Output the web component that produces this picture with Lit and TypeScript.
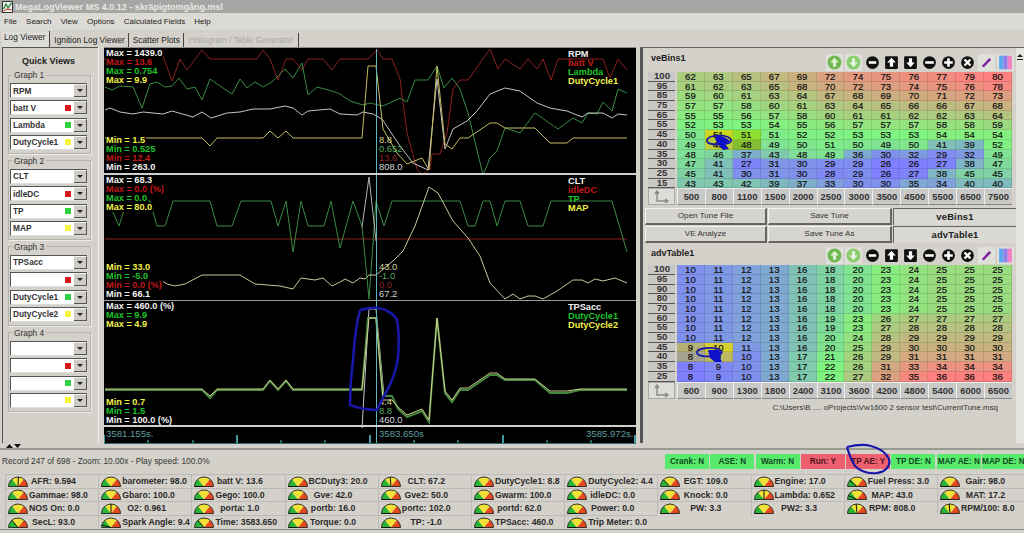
import { LitElement, css, html, svg } from "lit";
import { customElement } from "lit/decorators.js";

type Pt = [number, number];

const pts = (p: Pt[]) => p.map(([x, y]) => `${x},${y}`).join(" ");

// trace coordinates are page pixels, the plot svg has a matching viewBox
const TRACES: { color: string; width?: number; p: Pt[] }[] = [
  { color: "#8a2020", p: [[104,58],[163,55],[172,80],[180,58],[187,69],[202,49],[210,58],[257,58],[263,49],[270,58],[278,79],[286,58],[293,58],[302,69],[308,58],[323,58],[332,69],[340,58],[368,58],[377,49],[383,58],[392,58],[400,78],[407,132],[417,168],[422,174],[430,168],[432,153],[440,153],[447,132],[453,88],[460,79],[468,79],[490,48],[498,68],[505,58],[520,68],[528,58],[537,68],[543,58],[551,79],[558,58],[603,58],[610,77],[618,58],[627,69]] },
  { color: "#3a8a44", p: [[105,86],[112,89],[120,85],[133,86],[142,107],[150,83],[157,81],[165,86],[172,85],[179,77],[187,88],[195,86],[202,99],[210,78],[217,83],[232,93],[240,78],[247,87],[255,81],[263,86],[272,81],[285,68],[293,77],[302,62],[308,94],[317,86],[332,90],[340,93],[350,100],[363,104],[370,102],[383,105],[400,97],[407,101],[415,79],[428,79],[437,65],[444,87],[452,77],[460,88],[468,112],[483,174],[490,157],[497,150],[505,127],[520,132],[535,112],[558,128],[573,117],[582,122],[588,112],[597,113],[603,101],[612,110],[618,88],[627,92]] },
  { color: "#c4c4c4", p: [[105,109],[110,107],[120,111],[133,113],[143,111],[163,113],[172,110],[193,116],[202,111],[211,117],[227,112],[240,111],[253,108],[270,108],[285,105],[293,107],[302,114],[308,110],[330,108],[340,113],[357,114],[363,111],[373,113],[382,118],[400,145],[413,162],[428,169],[437,78],[445,148],[453,128],[467,120],[477,110],[490,93],[505,87],[520,90],[537,102],[550,107],[567,110],[582,116],[588,112],[603,112],[612,117],[618,113],[627,114]] },
  { color: "#c4bc60", p: [[105,137],[202,137],[210,145],[217,137],[263,137],[270,130],[278,137],[286,130],[293,137],[362,137],[368,65],[376,65],[383,128],[397,152],[407,163],[422,157],[429,169],[437,65],[445,143],[452,148],[460,137],[468,137],[490,122],[497,122],[505,127],[535,127],[550,142],[567,142],[573,137],[627,137]] },

  { color: "#8a2020", p: [[105,238],[627,238]] },
  { color: "#3a8a44", p: [[108,200],[119,225],[127,200],[150,200],[157,225],[165,225],[173,200],[210,200],[217,225],[232,225],[241,200],[271,200],[278,225],[286,200],[293,251],[301,200],[308,225],[324,225],[331,200],[340,247],[353,200],[362,225],[369,298],[376,200],[384,225],[392,200],[460,200],[468,225],[475,225],[483,200],[490,200],[497,225],[505,200],[520,200],[528,225],[543,225],[551,200],[612,200],[627,251]] },
  { color: "#c8c89c", p: [[162,280],[167,283],[175,285],[185,283],[202,274],[240,274],[255,283],[280,285],[293,288],[301,277],[315,279],[323,277],[332,285],[340,281],[345,278],[353,282],[360,277],[365,278],[369,274],[376,274],[393,260],[403,250],[415,225],[429,186],[438,192],[453,220],[468,237],[480,255],[490,282],[505,298],[513,293],[520,298],[528,295],[535,295],[543,298],[557,290],[573,279],[582,279],[588,282],[595,278],[603,280],[615,277],[627,282]] },
  { color: "#b0b0b0", p: [[362,226],[369,176],[376,240]] },

  { color: "#c8c8c8", p: [[362,427],[369,308],[376,308],[384,395]] },
  { color: "#46883f", width: 2, p: [[105,389],[202,389],[210,397],[217,389],[263,389],[270,380],[278,389],[286,380],[293,389],[362,389],[368,317],[376,317],[383,395],[392,395],[398,408],[407,416],[422,410],[429,421],[437,317],[445,392],[452,401],[460,389],[468,389],[490,374],[497,374],[505,379],[535,379],[550,392],[567,392],[580,389],[627,389]] },
  { color: "#d0d08c", p: [[105,388],[202,388],[210,395],[217,388],[263,388],[270,379],[278,388],[286,379],[293,388],[362,388],[369,317],[376,317],[383,399],[392,399],[398,406],[407,414],[422,408],[429,419],[437,317],[445,390],[452,399],[460,387],[468,387],[490,372],[497,372],[505,378],[535,378],[550,390],[567,390],[580,388],[627,388]] },
];

const BLUE_LOOPS = [
  { w: 2.6, d: "M360 310 C366 309 372 307 378 308 C386 309 394 314 397 320 C399 330 399 345 398 358 C396 372 389 388 383 398 L377 410 C368 410 358 408 350 405 C350 390 351 375 353 360 C354 345 356 325 360 310" },
  { w: 2.2, d: "M847 447 C855 445 864 444 871 446 C879 448 886 453 889 459 C891 466 885 472 877 473 C868 474 860 471 855 466 C851 460 849 454 847 447" },
  { w: 1.8, d: "M707 140 C708 136 720 134 728 137 C734 140 731 144 722 144 C714 145 706 144 707 140" },
  { w: 1.8, d: "M697 352 C698 348 710 347 718 349 C724 351 723 355 714 356 C706 357 696 356 697 352" },
];

const BLUE_BLOBS = [
  "M717 135 L726 138 L730 141 L725 144 L729 149 L723 150 L718 144 L715 139 Z",
  "M708 350 L718 350 L721 352 L720 358 L722 362 L715 362 L710 358 Z",
];

const TICKS = [104, 148, 193, 237, 281, 325, 370, 414, 458, 503, 547, 591, 635];
const LONG_TICKS = [104, 237, 370, 503, 635];

const GROUPS = [
  { title: "Graph 1", items: ["RPM", "batt V", "Lambda", "DutyCycle1"] },
  { title: "Graph 2", items: ["CLT", "idleDC", "TP", "MAP"] },
  { title: "Graph 3", items: ["TPSacc", "", "DutyCycle1", "DutyCycle2"] },
  { title: "Graph 4", items: ["", "", "", ""] },
];
const SWATCHES = ["", "#d81818", "#30d040", "#f4f440"];

const PLOTS = [
  {
    max: [["Max = 1439.0", "w"], ["Max = 13.6", "r"], ["Max = 0.754", "g"], ["Max = 9.9", "y"]],
    min: [["Min = 1.5", "y"], ["Min = 0.525", "g"], ["Min = 12.4", "r"], ["Min = 263.0", "w"]],
    names: [["RPM", "w"], ["batt V", "r"], ["Lambda", "g"], ["DutyCycle1", "y"]],
    cur: [["8.8", "cy"], ["0.652", "cg"], ["13.6", "cr"], ["808.0", "cw"]],
  },
  {
    max: [["Max = 68.3", "w"], ["Max = 0.0 (%)", "r"], ["Max = 0.0", "g"], ["Max = 80.0", "y"]],
    min: [["Min = 33.0", "y"], ["Min = -5.0", "g"], ["Min = 0.0 (%)", "r"], ["Min = 66.1", "w"]],
    names: [["CLT", "w"], ["idleDC", "r"], ["TP", "g"], ["MAP", "y"]],
    cur: [["43.0", "cy"], ["-1.0", "cg"], ["0.0", "cr"], ["67.2", "cw"]],
  },
  {
    max: [["Max = 460.0 (%)", "w"], ["Max = 9.9", "g"], ["Max = 4.9", "y"]],
    min: [["Min = 0.7", "y"], ["Min = 1.5", "g"], ["Min = 100.0 (%)", "w"]],
    names: [["TPSacc", "w"], ["DutyCycle1", "g"], ["DutyCycle2", "y"]],
    cur: [["4.4", "cy"], ["8.8", "cg"], ["460.0", "cw"]],
  },
];

const VE = {
  title: "veBins1",
  low: 26, mid: 53, high: 80,
  rows: [100, 95, 85, 75, 65, 55, 45, 40, 35, 30, 25, 15],
  cols: [500, 800, 1100, 1500, 2000, 2500, 3000, 3500, 4500, 5500, 6500, 7500],
  cells: [
    [62, 63, 65, 67, 69, 72, 74, 75, 76, 77, 79, 80],
    [61, 62, 63, 65, 68, 70, 72, 73, 74, 75, 76, 78],
    [59, 60, 61, 63, 64, 67, 68, 69, 70, 71, 72, 73],
    [57, 57, 58, 60, 61, 63, 64, 65, 66, 66, 67, 68],
    [55, 55, 56, 57, 58, 60, 61, 61, 62, 62, 63, 64],
    [52, 53, 53, 54, 55, 56, 57, 57, 57, 58, 58, 59],
    [50, 51, 51, 51, 52, 52, 53, 53, 53, 54, 54, 54],
    [49, 49, 48, 49, 50, 51, 50, 49, 50, 41, 39, 52],
    [48, 46, 37, 43, 48, 49, 36, 30, 32, 29, 32, 49],
    [47, 41, 27, 31, 30, 29, 29, 26, 26, 27, 38, 47],
    [45, 41, 30, 31, 30, 28, 29, 26, 27, 38, 45, 45],
    [43, 43, 42, 39, 37, 33, 30, 30, 35, 34, 40, 40],
  ],
  hot: { "6,1": "#ccd820", "6,2": "#90e030", "7,1": "#b8d040", "7,2": "#84bc34" } as Record<string, string>,
};

const ADV_A = [10, 11, 12, 13, 16, 18, 20, 23, 24, 25, 25, 25];
const ADV = {
  title: "advTable1",
  low: 8, mid: 22, high: 36,
  rows: [100, 95, 90, 80, 70, 60, 55, 50, 45, 40, 35, 25],
  cols: [600, 900, 1300, 1800, 2400, 3100, 3600, 4200, 4800, 5400, 6000, 6500],
  cells: [
    ADV_A, ADV_A, ADV_A, ADV_A, ADV_A,
    [10, 11, 12, 13, 16, 19, 23, 26, 27, 27, 27, 27],
    [10, 11, 12, 13, 16, 19, 23, 27, 28, 28, 28, 28],
    [10, 11, 12, 13, 16, 20, 24, 28, 29, 29, 29, 29],
    [9, 10, 11, 13, 16, 20, 25, 29, 30, 30, 30, 30],
    [8, 9, 10, 13, 17, 21, 26, 29, 31, 31, 31, 31],
    [8, 9, 10, 13, 17, 22, 26, 31, 33, 34, 34, 34],
    [8, 9, 10, 13, 17, 22, 27, 32, 35, 36, 36, 36],
  ],
  hot: { "8,0": "#b4b070", "8,1": "#d8d030", "9,0": "#a4a490", "9,1": "#c0b860" } as Record<string, string>,
};

// colour scale of a cell: blue at low, green at mid, red at high
function heat(v: number, low: number, mid: number, high: number) {
  if (v <= mid) {
    const t = Math.max(0, (v - low) / (mid - low));
    return `rgb(128,${Math.round(128 + 116 * t)},${Math.round(255 - 127 * t)})`;
  }
  const t = Math.min(1, (v - mid) / (high - mid));
  return `rgb(${Math.round(128 + 127 * t)},${Math.round(244 - 116 * t)},128)`;
}

const PILLS: [string, boolean][] = [
  ["Crank: N", false], ["ASE: N", false], ["Warm: N", false], ["Run: Y", true],
  ["TP AE: Y", true], ["TP DE: N", false], ["MAP AE: N", false], ["MAP DE: N", false],
];

// second value is the needle angle, degrees from the left end of the dial
const GAUGES: [string, number][] = [
  ["AFR: 9.594", 92], ["Gammae: 98.0", 0], ["NOS On: 0.0", 0], ["SecL: 93.0", 50],
  ["barometer: 98.0", 0], ["Gbaro: 100.0", 0], ["O2: 0.961", 90], ["Spark Angle: 9.4", 15],
  ["batt V: 13.6", 0], ["Gego: 100.0", 0], ["porta: 1.0", 0], ["Time: 3583.650", 50],
  ["BCDuty3: 20.0", 0], ["Gve: 42.0", 0], ["portb: 16.0", 0], ["Torque: 0.0", 0],
  ["CLT: 67.2", 85], ["Gve2: 50.0", 0], ["portc: 102.0", 0], ["TP: -1.0", 0],
  ["DutyCycle1: 8.8", 0], ["Gwarm: 100.0", 0], ["portd: 62.0", 0], ["TPSacc: 460.0", 0],
  ["DutyCycle2: 4.4", 0], ["idleDC: 0.0", 0], ["Power: 0.0", 0], ["Trip Meter: 0.0", 0],
  ["EGT: 109.0", 45], ["Knock: 0.0", 0], ["PW: 3.3", 0], ["", -1],
  ["Engine: 17.0", 0], ["Lambda: 0.652", 90], ["PW2: 3.3", 0], ["", -1],
  ["Fuel Press: 3.0", 40], ["MAP: 43.0", 25], ["RPM: 808.0", 85], ["", -1],
  ["Gair: 98.0", 0], ["MAT: 17.2", 0], ["RPM/100: 8.0", 85], ["", -1],
];

const TOOLS = ["gup", "gdown", "dash", "up", "down", "minus", "plus", "x", "pen", "pal"];

function toolIcon(kind: string) {
  const arrowUp = "M8 3.5 L12 8 H9.5 V12 H6.5 V8 H4 Z";
  const arrowDown = "M8 12.5 L12 8 H9.5 V4 H6.5 V8 H4 Z";
  switch (kind) {
    case "gup":
      return svg`<circle cx="8" cy="8" r="6.5" fill="#6cb84e"/><path d=${arrowUp} fill="#dff0d4"/>`;
    case "gdown":
      return svg`<circle cx="8" cy="8" r="6.5" fill="#88cc6c"/><path d=${arrowDown} fill="#e4f4dc"/>`;
    case "dash":
      return svg`<circle cx="8" cy="8" r="6" fill="#111"/><rect x="4.5" y="6.8" width="7" height="2.4" fill="#fff"/>`;
    case "up":
      return svg`<rect x="2" y="2" width="12" height="12" rx="1" fill="#111"/><path d=${arrowUp} fill="#fff"/>`;
    case "down":
      return svg`<rect x="2" y="2" width="12" height="12" rx="1" fill="#111"/><path d=${arrowDown} fill="#fff"/>`;
    case "minus":
      return svg`<circle cx="8" cy="8" r="6" fill="#111"/><rect x="4" y="6.8" width="8" height="2.4" fill="#fff"/>`;
    case "plus":
      return svg`<circle cx="8" cy="8" r="6" fill="#111"/><path d="M4 8 H12 M8 4 V12" stroke="#fff" stroke-width="2.4"/>`;
    case "x":
      return svg`<circle cx="8" cy="8" r="6" fill="#111"/><path d="M5.2 5.2 L10.8 10.8 M10.8 5.2 L5.2 10.8" stroke="#fff" stroke-width="2.2"/>`;
    case "pen":
      return svg`<path d="M4.5 12 L11.5 4.5" stroke="#7a1fa0" stroke-width="2.4"/>`;
    default:
      return svg`<rect x="2" y="1.5" width="4" height="13" fill="#5aa8f0"/><rect x="6" y="1.5" width="4" height="13" fill="#9080e8"/><rect x="10" y="1.5" width="4" height="13" fill="#f080c8"/>`;
  }
}

function gauge(angle: number) {
  const rad = (angle * Math.PI) / 180;
  const nx = 10 - 9.5 * Math.cos(rad);
  const ny = 10.5 - 9.5 * Math.sin(rad);
  return html`<svg class="dial" width="20" height="11" viewBox="0 0 20 11">
    <path d="M10 10.5 L.5 10.5 A9.5 9.5 0 0 1 4 3.2 Z" fill="#28b434"/>
    <path d="M10 10.5 L4 3.2 A9.5 9.5 0 0 1 16 3.2 Z" fill="#f0e038"/>
    <path d="M10 10.5 L16 3.2 A9.5 9.5 0 0 1 19.5 10.5 Z" fill="#e64a1c"/>
    <path d="M.5 10.5 A9.5 9.5 0 0 1 19.5 10.5 Z" fill="none" stroke="#222" stroke-width=".9"/>
    <line x1="10" y1="10.5" x2=${nx} y2=${ny} stroke="#111" stroke-width="1"/>
  </svg>`;
}

@customElement("app-root")
export class AppRoot extends LitElement {
  static styles = css`
    :host {
      display: block;
      position: relative;
      width: 1024px;
      height: 533px;
      overflow: hidden;
      background: #d4d1ca;
      color: #1c1c1c;
      font-family: "Liberation Sans", Arial, sans-serif;
      font-size: 9px;
    }
    * {
      box-sizing: border-box;
    }

    .titlebar {
      display: flex;
      align-items: center;
      gap: 2px;
      height: 13px;
      padding-left: 2px;
      background: #a6a6a4;
      color: #e8e8e6;
      font-weight: bold;
      font-size: 9px;
      white-space: nowrap;
    }
    .menu {
      display: flex;
      align-items: center;
      height: 17px;
      padding-left: 4px;
      background: #dcdad5;
      font-size: 8px;
    }
    .menu span {
      margin-right: 9.2px;
    }
    .tabs {
      display: flex;
      align-items: flex-end;
      height: 17px;
      padding-left: 2px;
      font-size: 8.3px;
    }
    .tab {
      height: 14px;
      line-height: 14px;
      padding: 0 3px;
      border-right: 1px solid #444;
      margin-right: 1px;
      white-space: nowrap;
    }
    .tab.on {
      height: 16px;
      line-height: 13px;
      background: #dedcd7;
      padding: 0 4px 0 2px;
    }
    .tab.off {
      color: #a8a8a6;
      padding: 0 5px 0 4px;
    }

    .main {
      display: flex;
      height: 396px;
      padding-left: 2px;
    }

    .quick {
      flex: 0 0 96px;
      border-left: 1px solid #555;
      border-top: 1px solid #555;
      padding: 0 7px 0 5px;
    }
    .quick h3 {
      margin: 0 0 4px;
      height: 18px;
      padding-top: 7px;
      line-height: 12px;
      font-size: 9px;
      text-align: center;
      padding-right: 2px;
    }
    fieldset {
      display: flex;
      flex-direction: column;
      gap: 2.33px;
      margin: 0 0 2px;
      padding: 3px 3px 3px 1px;
      border: 1px solid #b4b2ac;
      box-shadow: 1px 1px 0 #ecebe8;
    }
    legend {
      padding: 0 2px;
      margin-left: 2px;
      height: 10px;
      line-height: 10px;
      font-size: 8.4px;
      color: #333;
    }
    .combo {
      display: flex;
      align-items: center;
      height: 15px;
      background: #fff;
      border: 1px solid #555;
      border-right: none;
      border-bottom-color: #ddd;
      padding-left: 2px;
      font-weight: bold;
      font-size: 8.3px;
      color: #333;
      white-space: nowrap;
    }
    .combo .txt {
      flex: 1;
      overflow: hidden;
    }
    .swatch {
      flex: none;
      width: 6px;
      height: 6px;
      margin: 0 3px 0 1px;
    }
    .arrow {
      display: flex;
      flex: none;
      align-items: center;
      justify-content: center;
      width: 13px;
      height: 13px;
      background: #cfccc5;
      border-right: 1px solid #555;
      border-bottom: 1px solid #555;
      border-top: 1px solid #f2f2f0;
    }
    .arrow::after {
      content: "";
      border-left: 3px solid transparent;
      border-right: 3px solid transparent;
      border-top: 3px solid #222;
    }

    .gutter {
      flex: 0 0 6px;
      border-left: 1px solid #efeeeb;
    }

    .plots {
      position: relative;
      flex: 0 0 532px;
      display: flex;
      flex-direction: column;
      height: 396px;
      background: #000;
      border-top: 1px solid #8c8c8c;
    }
    .traces {
      position: absolute;
      left: 0;
      top: 0;
    }
    .panel {
      position: relative;
      height: 126.5px;
      border-bottom: 2px solid #cfcfcf;
    }
    .panel:nth-child(3) {
      border-bottom-width: 1px;
      border-bottom-color: #9a9a9a;
      height: 126px;
    }
    .stack {
      position: absolute;
      z-index: 1;
      display: flex;
      flex-direction: column;
      align-items: flex-start;
      font-weight: bold;
      font-size: 9.2px;
      line-height: 9.1px;
    }
    .stack span {
      background: #000;
      padding-right: 1px;
    }
    .stack.max {
      left: 2px;
      top: 1px;
    }
    .stack.min {
      left: 2px;
      bottom: 0;
    }
    .stack.names {
      left: 464px;
      top: 2px;
    }
    .stack.names span {
      background: none;
    }
    .stack.cur {
      left: 275px;
      bottom: 1px;
      font-weight: normal;
      font-size: 9.4px;
    }
    .stack.cur span {
      background: none;
    }
    .w { color: #f2f2f2; }
    .r { color: #c01a1a; }
    .g { color: #1fc42a; }
    .y { color: #f2f24a; }
    .cw { color: #d8d8d8; }
    .cr { color: #8c2424; }
    .cg { color: #5aa860; }
    .cy { color: #d4d49a; }

    .timeline {
      position: relative;
      flex: 1;
      color: #5f9ea0;
      font-size: 9.6px;
      line-height: 12px;
    }
    .timeline span {
      position: absolute;
      top: 1px;
    }

    .side {
      flex: 0 0 4px;
    }

    .right {
      flex: 1;
      display: flex;
      border-left: 3px solid #555;
      border-top: 1px solid #666;
    }
    .right-body {
      flex: 0 0 373px;
      padding-left: 5px;
    }
    .right-edge {
      flex: 1;
      background: #e6e5e1;
      padding: 6px 0 0 1px;
    }
    .right-edge svg {
      display: block;
    }

    .thead {
      display: flex;
      justify-content: space-between;
      align-items: flex-start;
      height: 24px;
    }
    .thead.second {
      height: 22px;
    }
    .thead b {
      font-size: 9px;
      padding-top: 5px;
      padding-left: 3px;
    }
    .tools {
      display: flex;
      gap: 2px;
      margin-right: 2px;
      padding-top: 6px;
    }
    .thead.second .tools {
      padding-top: 4px;
    }
    .tool {
      width: 17px;
      height: 17px;
    }
    .tool.pale {
      background: #e0e0da;
    }
    .tool svg {
      display: block;
    }

    .grid {
      display: grid;
      grid-template-columns: 29px repeat(12, 1fr);
      grid-template-rows: repeat(12, 9.7px) 17px;
      margin-right: 4px;
      font-size: 9.6px;
      line-height: 9.7px;
      text-align: center;
      color: #111;
    }
    .rowhead {
      background: #c9c8c5;
      border-bottom: 1px solid #555;
      font-weight: bold;
      color: #333;
      padding-left: 1px;
      line-height: 8.7px;
      margin-right: 2px;
    }
    .cell {
      border-right: 1px solid rgba(0, 0, 0, 0.1);
      border-bottom: 1px solid rgba(0, 0, 0, 0.12);
      -webkit-text-stroke: 0.2px #111;
    }
    .corner {
      background: #dedcd8;
      border: 1px solid #aaa;
      margin-right: 2px;
    }
    .corner svg {
      display: block;
    }
    .axis {
      background: #c8c8c6;
      border-top: 1px solid #eee;
      border-left: 1px solid #eee;
      border-bottom: 1px solid #888;
      font-weight: bold;
      color: #333;
      line-height: 15px;
      font-size: 9.4px;
    }

    .buttons {
      display: grid;
      grid-template-columns: 122px 124px 1fr;
      grid-template-rows: 17px 17px;
      gap: 1px;
      margin: 3px 0 0 -3px;
      font-size: 8.1px;
      color: #333;
    }
    .btn {
      background: #d6d4ce;
      border-top: 1px solid #f4f3f0;
      border-left: 1px solid #f4f3f0;
      border-right: 2px solid #66645f;
      border-bottom: 2px solid #66645f;
      text-align: center;
      line-height: 14px;
    }
    .btn.pick {
      background: #dad8d3;
      border: none;
      border-top: 1px solid #66645f;
      border-left: 1px solid #66645f;
      font-weight: bold;
      font-size: 9.4px;
      letter-spacing: 0.2px;
      line-height: 16px;
      color: #222;
    }
    .path {
      margin-top: 4px;
      text-align: right;
      padding-right: 18px;
      font-size: 7.9px;
      line-height: 10px;
      color: #333;
    }

    .bottom {
      height: 90px;
    }
    .strip {
      display: flex;
      align-items: center;
      height: 7px;
      border-bottom: 2px solid #9a9893;
      padding-left: 6px;
      gap: 1px;
    }
    .strip svg {
      display: block;
    }
    .status {
      display: flex;
      height: 24px;
      padding-top: 4px;
    }
    .record {
      flex: 0 0 665px;
      padding-left: 2px;
      line-height: 14px;
      font-size: 8.3px;
      color: #333;
    }
    .pills {
      display: flex;
      flex: none;
      gap: 1.3px;
    }
    .pill {
      width: 44px;
      height: 15px;
      line-height: 15px;
      text-align: center;
      background: #58ea6c;
      color: #124a22;
      font-weight: bold;
      font-size: 8.2px;
      white-space: nowrap;
    }
    .pill:last-child {
      width: 42px;
    }
    .pill.red {
      background: #ee6070;
      color: #4a1420;
    }
    .gauges {
      display: grid;
      grid-auto-flow: column;
      grid-template-rows: repeat(4, 13.6px);
      grid-template-columns: repeat(11, 93.2px);
      padding-left: 5px;
      height: 56px;
      border-bottom: 1px solid #8a8a86;
    }
    .gauge {
      display: flex;
      align-items: center;
      padding-left: 2px;
      border-top: 1px solid #bcbab4;
      border-left: 1px solid #bcbab4;
      font-weight: bold;
      font-size: 8.7px;
      color: #2a2a2a;
      white-space: nowrap;
    }
    .gauge.none {
      border: none;
    }
    .dial {
      flex: none;
    }
    .name {
      display: inline-block;
      min-width: 50px;
      padding-left: 1px;
      text-align: center;
    }

    .marks {
      position: absolute;
      left: 0;
      top: 0;
      z-index: 3;
      pointer-events: none;
    }
  `;

  private renderGroup(g: { title: string; items: string[] }) {
    return html`<fieldset>
      <legend>${g.title}</legend>
      ${g.items.map(
        (item, i) => html`<div class="combo">
          <span class="txt">${item}</span>
          ${SWATCHES[i]
            ? html`<span class="swatch" style="background:${SWATCHES[i]}"></span>`
            : ""}
          <span class="arrow"></span>
        </div>`
      )}
    </fieldset>`;
  }

  private renderPlots() {
    return html`<div class="plots">
      <svg class="traces" width="532" height="396" viewBox="104 47 532 396">
        ${TRACES.map(
          (t) => svg`<polyline points=${pts(t.p)} fill="none" stroke=${t.color}
            stroke-width=${t.width ?? 1}/>`
        )}
        <line x1="376.5" y1="48" x2="376.5" y2="443" stroke="#62b4b8" stroke-width="1"/>
        ${TICKS.map(
          (x) => svg`<line x1=${x} x2=${x} y1=${LONG_TICKS.includes(x) ? 434 : 439} y2="443"
            stroke="#58c8d0" stroke-width=${LONG_TICKS.includes(x) ? 1.5 : 1}/>`
        )}
        <line x1="104" x2="636" y1="442.5" y2="442.5" stroke="#2a6a70"/>
      </svg>
      ${PLOTS.map(
        (p) => html`<div class="panel">
          <div class="stack max">${p.max.map(([t, c]) => html`<span class=${c}>${t}</span>`)}</div>
          <div class="stack min">${p.min.map(([t, c]) => html`<span class=${c}>${t}</span>`)}</div>
          <div class="stack names">${p.names.map(([t, c]) => html`<span class=${c}>${t}</span>`)}</div>
          <div class="stack cur">${p.cur.map(([t, c]) => html`<span class=${c}>${t}</span>`)}</div>
        </div>`
      )}
      <div class="timeline">
        <span style="left:2px">3581.155s.</span>
        <span style="left:275px">3583.650s</span>
        <span style="left:482px">3585.972s.</span>
      </div>
    </div>`;
  }

  private renderTable(t: typeof VE, second = false) {
    return html`<div class="thead ${second ? "second" : ""}">
        <b>${t.title}</b>
        <div class="tools">
          ${TOOLS.map(
            (k) => html`<span class="tool ${["gup", "gdown", "pen", "pal"].includes(k) ? "pale" : ""}"
              ><svg width="17" height="17" viewBox="0 0 16 16">${toolIcon(k)}</svg></span
            >`
          )}
        </div>
      </div>
      <div class="grid">
        ${t.cells.map(
          (row, r) => html`<div class="rowhead">${t.rows[r]}</div>
            ${row.map(
              (v, c) => html`<div
                class="cell"
                style="background:${t.hot[`${r},${c}`] ?? heat(v, t.low, t.mid, t.high)}"
              >${v}</div>`
            )}`
        )}
        <div class="corner">
          <svg width="25" height="15" viewBox="0 0 25 15">
            <path d="M8 2 V12 H19 M6 5 L8 2 L10 5 M16 10 L19 12 L16 14" fill="none" stroke="#8a8a86" stroke-width="1.4"/>
          </svg>
        </div>
        ${t.cols.map((c) => html`<div class="axis">${c}</div>`)}
      </div>`;
  }

  render() {
    return html`
      <div class="titlebar">
        <svg width="11" height="12" viewBox="0 0 11 12">
          <rect x=".5" y=".5" width="10" height="11" fill="#f4f4f0" stroke="#333"/>
          <path d="M1.5 8 L4 3 L6 7 L9.5 2" fill="none" stroke="#2a8a3a" stroke-width="1.4"/>
          <path d="M1.5 10 L5 8 L9.5 9" fill="none" stroke="#c02020"/>
        </svg>
        MegaLogViewer MS 4.0.12 - skräpigtomgång.msl
      </div>
      <div class="menu">
        <span>File</span><span>Search</span><span>View</span><span>Options</span><span>Calculated Fields</span><span>Help</span>
      </div>
      <div class="tabs">
        <div class="tab on">Log Viewer</div>
        <div class="tab">Ignition Log Viewer</div>
        <div class="tab">Scatter Plots</div>
        <div class="tab off">Histogram / Table Generator</div>
      </div>

      <div class="main">
        <div class="quick">
          <h3>Quick Views</h3>
          ${GROUPS.map((g) => this.renderGroup(g))}
        </div>
        <div class="gutter"></div>
        ${this.renderPlots()}
        <div class="side"></div>
        <div class="right">
          <div class="right-body">
            ${this.renderTable(VE)}
            <div class="buttons">
              <div class="btn">Open Tune File</div>
              <div class="btn">Save Tune</div>
              <div class="btn pick">veBins1</div>
              <div class="btn">VE Analyze</div>
              <div class="btn">Save Tune As</div>
              <div class="btn pick">advTable1</div>
            </div>
            ${this.renderTable(ADV, true)}
            <div class="path">C:\\Users\\B .... oProjects\\Vw1600 2 sensor test\\CurrentTune.msq</div>
          </div>
          <div class="right-edge">
            <svg width="6" height="6" viewBox="0 0 6 6">
              <path d="M0 3 L3 0 L6 3 Z M0 5 H6 V6 H0 Z" fill="#222"/>
            </svg>
          </div>
        </div>
      </div>

      <div class="bottom">
        <div class="strip">
          <svg width="7" height="4" viewBox="0 0 7 4"><path d="M0 4 L3.5 0 L7 4 Z" fill="#111"/></svg>
          <svg width="7" height="4" viewBox="0 0 7 4"><path d="M0 0 L3.5 4 L7 0 Z" fill="#111"/></svg>
        </div>
        <div class="status">
          <div class="record">Record 247 of 698 - Zoom: 10.00x - Play speed: 100.0%</div>
          <div class="pills">
            ${PILLS.map(([t, red]) => html`<div class="pill ${red ? "red" : ""}">${t}</div>`)}
          </div>
        </div>
        <div class="gauges">
          ${GAUGES.map(([t, a]) =>
            t
              ? html`<div class="gauge">${gauge(a)}<span class="name">${t}</span></div>`
              : html`<div class="gauge none"></div>`
          )}
        </div>
      </div>

      <svg class="marks" width="1024" height="533" viewBox="0 0 1024 533">
        ${BLUE_LOOPS.map(
          (l) => svg`<path d=${l.d} fill="none" stroke="#1818a8" stroke-width=${l.w}/>`
        )}
        ${BLUE_BLOBS.map((d) => svg`<path d=${d} fill="#1010c8"/>`)}
      </svg>
    `;
  }
}
